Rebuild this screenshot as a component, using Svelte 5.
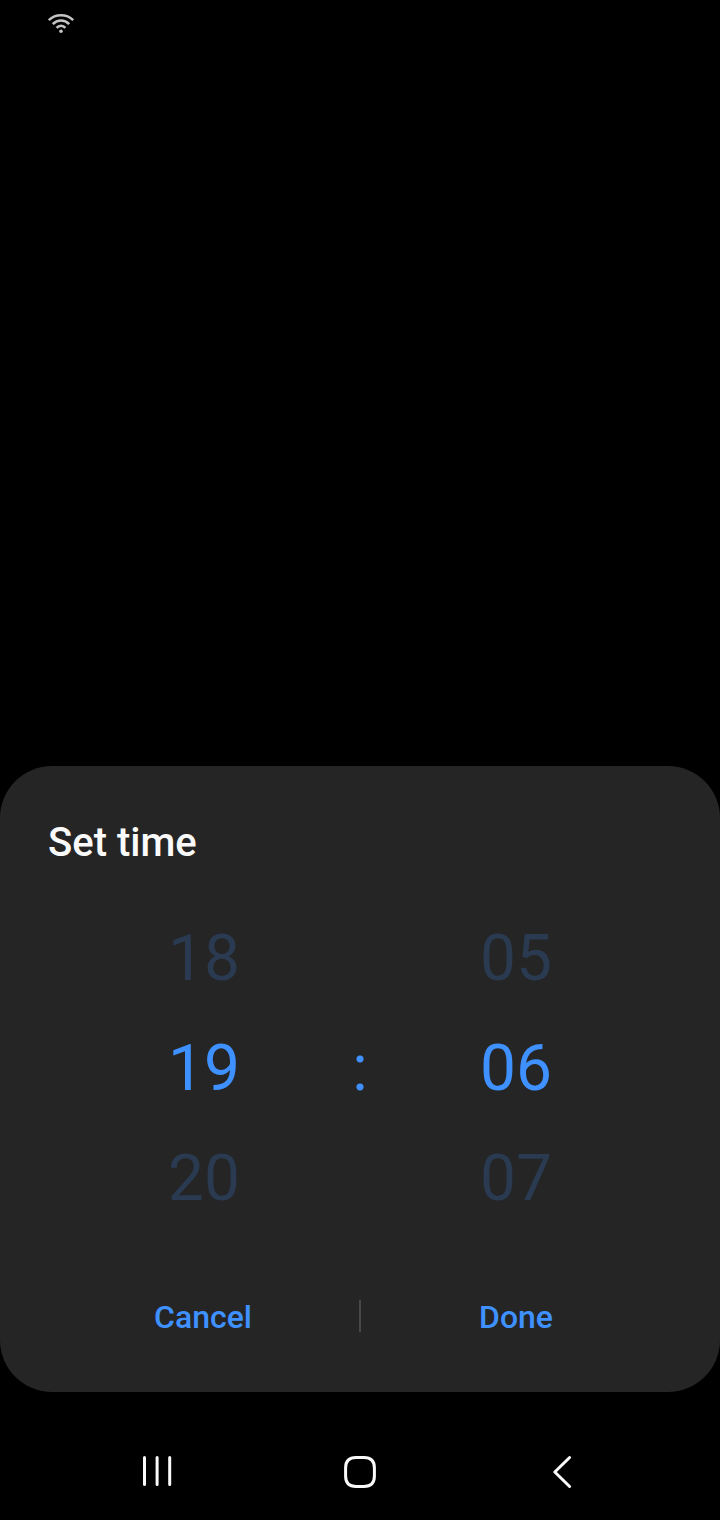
<script>
  const hours = ['18', '19', '20'];
  const minutes = ['05', '06', '07'];
</script>

<main>
  <header>
    <svg class="wifi" viewBox="0 0 28 22" width="28" height="22">
      <g fill="none" stroke="#c4c4c4" stroke-width="2.6">
        <path d="M1.8 8.1C8.7 1.7 19.3 1.7 26.2 8.1" />
        <path d="M5.8 12.1C10.5 7.3 17.5 7.3 22.2 12.1" />
        <path d="M9.6 15.9C12.1 13.1 15.9 13.1 18.4 15.9" />
      </g>
      <circle cx="14" cy="19.2" r="1.8" fill="#c4c4c4" />
    </svg>
  </header>
  <section>
    <h1>Set time</h1>
    <div class="picker">
      <div class="wheel">
        {#each hours as h, i}<span class:active={i === 1}>{h}</span>{/each}
      </div>
      <span class="colon">:</span>
      <div class="wheel">
        {#each minutes as m, i}<span class:active={i === 1}>{m}</span>{/each}
      </div>
    </div>
    <div class="actions">
      <button class="cancel">Cancel</button>
      <i></i>
      <button>Done</button>
    </div>
  </section>
  <nav>
    <svg viewBox="0 0 40 40" width="40" height="40"><path d="M7.5 5.5v27M20.1 5.500v27M32.700 5.500v27" /></svg>
    <svg viewBox="0 0 40 40" width="40" height="40"><path d="M16 5.600h8c7.200 0 10.400 3.200 10.400 10.400v8c0 7.200-3.200 10.400-10.400 10.400h-8c-7.200 0-10.400-3.200-10.400-10.400v-8c0-7.200 3.200-10.400 10.400-10.400z" /></svg>
    <svg viewBox="0 0 40 40" width="40" height="40"><path d="M27.600 5.500L12.800 20l14.800 14.500" /></svg>
  </nav>
</main>

<style>
  :global(body) { background: #000; }
  main { box-sizing: border-box; width: 720px; height: 1520px; display: flex; flex-direction: column; background: #000; font-family: Roboto, sans-serif; overflow: hidden; }
  header { height: 766px; box-sizing: border-box; padding: 12px 0 0 47px; }
  svg { display: block; }
  section { height: 626px; box-sizing: border-box; border-radius: 52px; background: #252525; padding-top: 53px; }
  h1 { margin: 0 0 37px 48px; height: 48px; line-height: 48px; font-size: 40px; font-weight: 500; color: #fafafa; }
  .picker { display: grid; grid-template-columns: 264px 48px 264px; justify-content: center; align-items: center; height: 330px; }
  .wheel { display: grid; grid-template-rows: repeat(3, 110px); text-align: center; }
  .wheel span, .colon { font-size: 64px; line-height: 110px; color: #293a51; }
  .wheel .active, .colon { color: #3e91ff; }
  .colon { text-align: center; }
  .actions { display: grid; grid-template-columns: 310px 2px 310px; justify-content: center; align-items: center; height: 74px; margin-top: 45px; }
  button { border: 0; padding: 2px 0 0; background: none; font: 500 32px/72px Roboto, sans-serif; color: #3e91ff; }
  .cancel { padding-right: 2px; }
  i { width: 2px; height: 32px; background: #484848; }
  nav { display: flex; height: 128px; padding: 60px 138px 0 137px; justify-content: space-between; box-sizing: border-box; }
  nav svg { fill: none; stroke: #fafafa; stroke-width: 3; stroke-linecap: round; stroke-linejoin: round; }
</style>
